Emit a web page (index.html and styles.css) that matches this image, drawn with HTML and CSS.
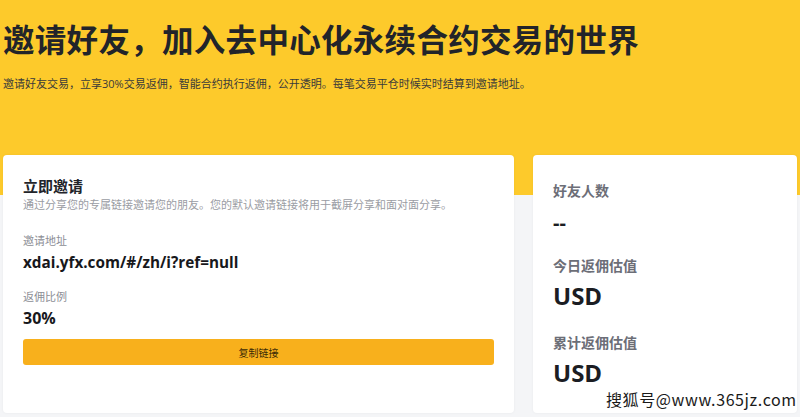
FILE: index.html
```html
<!DOCTYPE html>
<html lang="zh">
<head>
    <meta charset="UTF-8">
    <meta name="viewport" content="width=device-width, initial-scale=1">
    <title>邀请好友</title>
    <link rel="stylesheet" href="styles.css">
</head>
<body>
    <div class="hero">
        <h1>邀请好友，加入去中心化永续合约交易的世界</h1>
        <p class="lead">邀请好友交易，立享30%交易返佣，智能合约执行返佣，公开透明。每笔交易平仓时候实时结算到邀请地址。</p>
    </div>

    <div class="cards">
        <div class="card invite">
            <h2>立即邀请</h2>
            <p class="desc">通过分享您的专属链接邀请您的朋友。您的默认邀请链接将用于截屏分享和面对面分享。</p>

            <div class="label">邀请地址</div>
            <div class="value link">xdai.yfx.com/#/zh/i?ref=null</div>

            <div class="label">返佣比例</div>
            <div class="value">30%</div>

            <button class="copy">复制链接</button>
        </div>

        <div class="card stats">
            <div class="stat-label">好友人数</div>
            <div class="stat-value dash">--</div>

            <div class="stat-label">今日返佣估值</div>
            <div class="stat-value">USD</div>

            <div class="stat-label">累计返佣估值</div>
            <div class="stat-value">USD</div>
        </div>
    </div>

    <div class="watermark">搜狐号@www.365jz.com</div>
</body>
</html>
```

FILE: styles.css
```css
body {
    margin: 0;
    font-family: "Open Sans", "Noto Sans CJK SC", sans-serif;
    background-color: #f4f5f7;
    color: #1f2127;
    height: 417px;
    overflow: hidden;
    position: relative;
}

.hero {
    background: #fdca2b;
    height: 195px;
    padding: 18px 0 0 3px;
    box-sizing: border-box;
}

h1 {
    margin: 0;
    font-size: 31.5px;
    font-weight: 700;
    line-height: 44px;
    letter-spacing: 0.3px;
    color: #22242a;
}

.lead {
    margin: 14px 0 0;
    font-size: 11px;
    line-height: 16px;
    color: #3a3a3a;
}

.cards {
    display: flex;
    gap: 19px;
    margin: -40px 3px 0 3px;
}

.card {
    background: #fff;
    border-radius: 4px;
    box-shadow: 0 0 3px rgba(0,0,0,0.05);
    height: 258px;
    box-sizing: border-box;
}

.invite {
    width: 511px;
    padding: 21px 20px 0 20px;
}

.invite h2 {
    margin: 0;
    font-size: 15px;
    line-height: 20px;
    font-weight: 700;
    color: #22242a;
}

.desc {
    margin: 1px 0 0;
    font-size: 11px;
    line-height: 15px;
    color: #9a9ca3;
}

.label {
    margin-top: 21px;
    font-size: 11px;
    line-height: 16px;
    color: #8c8e95;
}

.label + .value {
    margin-top: 2px;
}

.value {
    font-size: 16px;
    line-height: 22px;
    font-weight: 700;
    color: #17181c;
}

.value.link {
    font-size: 15.3px;
    margin-bottom: -5px;
}

.copy {
    display: block;
    width: 100%;
    margin-top: 10px;
    height: 26px;
    border: none;
    border-radius: 3px;
    background: #f8b01c;
    font-family: "Noto Sans CJK SC", sans-serif;
    font-size: 10px;
    color: #3a2a06;
}

.stats {
    width: 264px;
    padding: 25px 20px 0 20px;
}

.stat-label {
    font-family: "Noto Sans CJK SC", sans-serif;
    font-size: 14px;
    line-height: 20px;
    font-weight: 700;
    color: #6c6e77;
}

.stat-value {
    font-size: 24px;
    line-height: 30px;
    font-weight: 700;
    color: #1b1d23;
    margin-top: 6px;
    margin-bottom: 21px;
}

.stat-value.dash {
    font-size: 20px;
    margin-top: 8px;
    margin-bottom: 17px;
}

.watermark {
    position: absolute;
    left: 606px;
    top: 388px;
    font-family: "Noto Sans CJK SC", sans-serif;
    font-size: 16px;
    line-height: 22px;
    letter-spacing: 0.6px;
    color: #1a1a1a;
    text-shadow: 0 0 2px #fff, 0 0 2px #fff;
}
```
